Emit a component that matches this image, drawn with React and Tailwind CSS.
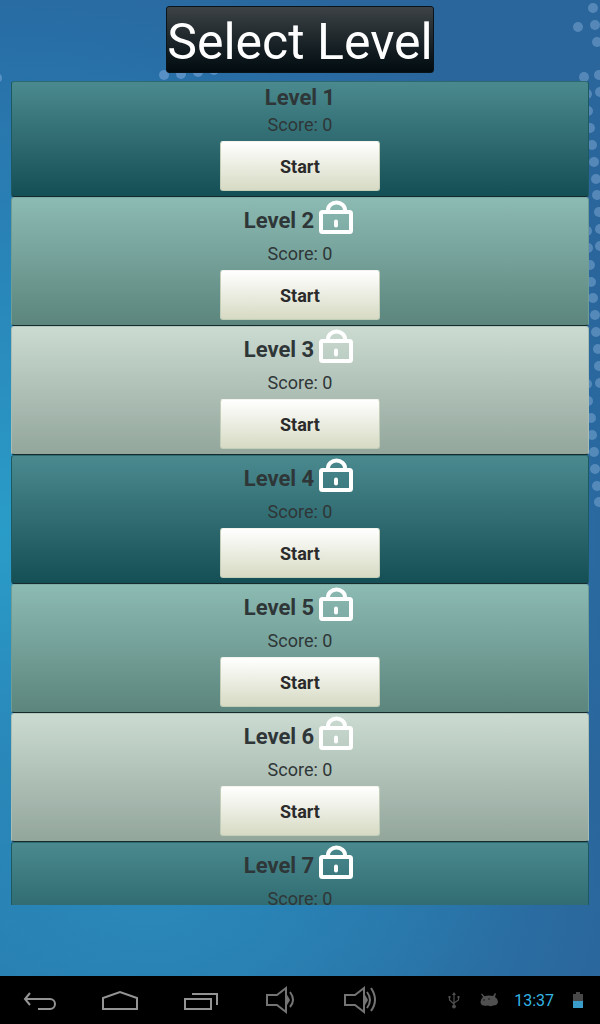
import React, { useState } from 'react';

const LEVELS = [
    { id: 1, score: 0, locked: false },
    { id: 2, score: 0, locked: true },
    { id: 3, score: 0, locked: true },
    { id: 4, score: 0, locked: true },
    { id: 5, score: 0, locked: true },
    { id: 6, score: 0, locked: true },
    { id: 7, score: 0, locked: true },
];

const ROW_STYLES = [
    "border-x-[#1d5a60] border-t-[#2c6a6f] bg-linear-to-b from-[#4a8a8f] to-[#154f56]",
    "border-x-[#6f9d95] border-t-[#7dada6] bg-linear-to-b from-[#8cbbb4] to-[#5b857d]",
    "border-x-[#a9bdb3] border-t-[#b5c6bd] bg-linear-to-b from-[#cbdbd2] to-[#93a69c]",
];

// faint dots of the wallpaper: [x from the right edge, y]
const DOTS = [
    [7, 8], [22, 27], [5, 25], [3, 42], [16, 77], [1, 75], [13, 94], [0, 92],
    [12, 111], [10, 128], [8, 145], [6, 162], [4, 179], [3, 195], [1, 212], [0, 229], [0, 246],
    [13, 231], [12, 248], [10, 265], [9, 282], [7, 298], [5, 315], [4, 332], [2, 349], [1, 366], [0, 383],
    [13, 384], [12, 401], [9, 418], [8, 435], [6, 452], [5, 469], [3, 486], [1, 502],
];

function LockIcon() {
    return (
        <svg className="size-10 self-start" viewBox="0 0 40 40" fill="none" stroke="white" aria-label="Locked">
            <path d="M12 14v-2a8.500 7.500 0 0 1 17 0v2" strokeWidth="4" />
            <rect x="5" y="14" width="30" height="20" rx="1.5" strokeWidth="4" />
            <path d="M20 23.500v4" strokeWidth="4" strokeLinecap="round" />
        </svg>
    );
}

function Wallpaper() {
    return (
        <div className="absolute inset-0 overflow-hidden bg-[radial-gradient(ellipse_80%_30%_at_25%_88%,#2a88b8_0%,#2a88b800_100%),radial-gradient(ellipse_110%_62%_at_0%_52%,#2a9cc8_0%,#2985b8_42%,#2870a8_75%,#2a659b_100%)]">
            <svg className="absolute right-0 top-0 h-full w-6 overflow-visible" fill="#6c9cc8" opacity="0.65">
                {DOTS.map(([x, y]) => <circle key={`${x}-${y}`} cx={24 - x} cy={y} r="5" />)}
            </svg>
            <svg className="absolute left-0 top-0 h-24 w-60" fill="#6499cd" opacity="0.8">
                <circle cx="-3" cy="78" r="5" />
                <circle cx="164" cy="75" r="5" />
                <circle cx="181" cy="74" r="5" />
                <circle cx="198" cy="72" r="5" />
                <circle cx="214" cy="70" r="5" />
            </svg>
        </div>
    );
}

function LevelRow({ level, index, onStart }) {
    return (
        <li className={`flex shrink-0 flex-col items-center rounded-[3px] border border-b-[#152b2d] pb-[5px] ${ROW_STYLES[index % 3]}`}>
            <div className={`flex items-center gap-0.5 ${level.locked ? "h-11" : "h-[31px]"}`}>
                <h2 className="text-[22px] font-bold">Level {level.id}</h2>
                {level.locked && <LockIcon />}
            </div>
            <p className="text-lg leading-6">Score: {level.score}</p>
            <button
                type="button"
                onClick={() => onStart(level.id)}
                className="mt-1 h-[50px] w-40 rounded-[3px] border border-[#c3ceb8] border-t-[#f4f4ef] bg-linear-to-b from-white to-[#d7dac3] pt-0.5 text-lg leading-6 font-bold text-[#2b2b2b]"
            >
                Start
            </button>
        </li>
    );
}

function NavButton({ label, children }) {
    return (
        <button type="button" aria-label={label} className="flex h-12 w-20 items-center justify-center">
            <svg className="h-8 w-10" viewBox="0 0 40 32" fill="none" stroke="#949494" strokeWidth="2">
                {children}
            </svg>
        </button>
    );
}

function SystemBar() {
    return (
        <nav className="relative flex h-12 shrink-0 items-center bg-black">
            <NavButton label="Back">
                <path d="M10 9l-5 6 5 6M5 15h25a5 5 0 0 1 0 10H18" />
            </NavButton>
            <NavButton label="Home">
                <path d="M3 25V14l17-6 17 6v11z" />
            </NavButton>
            <NavButton label="Recent apps">
                <path d="M5 15h26v10H5zM12 10h25v11" />
            </NavButton>
            <NavButton label="Volume down">
                <path d="M7 11h10l9-7v24l-9-7H7z" stroke="#747474" />
                <path d="M26 9l4 7-4 7z" fill="#747474" stroke="none" />
                <path d="M30 8q6 8 0 15" stroke="#747474" />
            </NavButton>
            <NavButton label="Volume up">
                <path d="M5 11h10l9-7v24l-9-7H5z" stroke="#747474" />
                <path d="M24 9l4 7-4 7z" fill="#747474" stroke="none" />
                <path d="M27 8q6 8 0 16M31 4q8 12 0 23" stroke="#747474" />
            </NavButton>
            <div className="ml-auto flex items-center pr-[17px]">
                <svg className="mr-5 h-[18px] w-3" viewBox="0 0 12 18" fill="none" stroke="#505050">
                    <path d="M6 3v12M1.500 6v3l4.500 4M10.500 6v3L6 12" strokeWidth="1.200" />
                    <path d="M4 4l2-3 2 3zM0.500 5h2v2h-2zM9.500 5h2v2h-2z" fill="#505050" stroke="none" />
                    <circle cx="6" cy="15.500" r="1.500" fill="#505050" />
                </svg>
                <svg className="mr-4 h-4 w-[18px]" viewBox="0 0 18 16" fill="#505050">
                    <path d="M3 5L1 2l1-.6L4.500 4.200Q9 3 13 4L15 1l1 .6L15 5q3 2 3 4.500 0 4-5 4-2 1.500-5 0Q1 15 0.500 10 0.500 7 3 5z" />
                    <circle cx="4" cy="8" r="0.700" fill="black" />
                    <circle cx="9" cy="7" r="0.700" fill="black" />
                </svg>
                <time className="mr-[19px] pt-0.5 text-base text-[#33b5e5]">13:37</time>
                <svg className="h-4 w-2.5" viewBox="0 0 10 16">
                    <path d="M3 0h4v2h3v7H0V2h3z" fill="#484848" />
                    <path d="M0 9h10v7H0z" fill="#3a9cc8" />
                </svg>
            </div>
        </nav>
    );
}

function App() {
    const [, setCurrent] = useState(null);

    return (
        <div className="relative flex h-screen flex-col font-[Roboto,sans-serif] text-[#2f3637]">
            <Wallpaper />
            <main className="relative flex min-h-0 flex-1 flex-col px-[11px] pb-[71px] pt-1.5">
                <h1 className="mb-2 self-center rounded-[3px] border border-[#0a1418] bg-linear-to-b from-[#3d4347] to-[#030c10] pt-1.5 text-[50px] leading-[59px] text-white">
                    Select Level
                </h1>
                <ul className="flex min-h-0 flex-1 flex-col overflow-hidden">
                    {LEVELS.map((level, index) => (
                        <LevelRow key={level.id} level={level} index={index} onStart={setCurrent} />
                    ))}
                </ul>
            </main>
            <SystemBar />
        </div>
    );
}

export default App;
